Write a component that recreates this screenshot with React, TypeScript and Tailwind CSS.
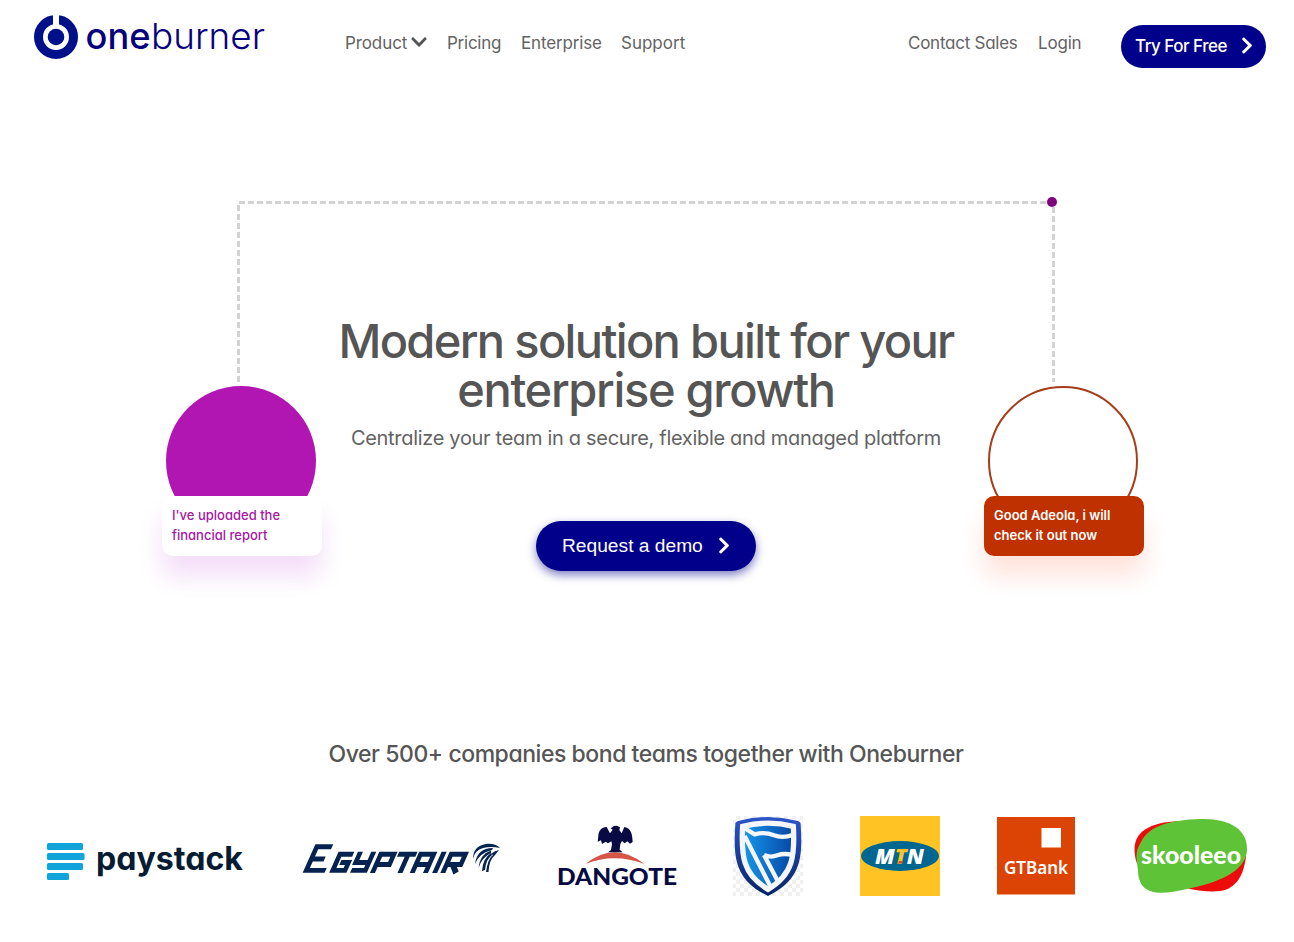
import React from 'react';

function ChevronRight({ className }: { className: string }) {
  return (
    <svg className={className} viewBox="0 0 320 512" fill="currentColor">
      <path d="M285.476 272.971L91.132 467.314c-9.373 9.373-24.569 9.373-33.941 0l-22.667-22.667c-9.357-9.357-9.375-24.522-.04-33.901L188.505 256 34.484 101.255c-9.335-9.379-9.317-24.544.04-33.901l22.667-22.667c9.373-9.373 24.569-9.373 33.941 0L285.475 239.03c9.373 9.372 9.373 24.568.001 33.941z" />
    </svg>
  );
}

function ChevronDown({ className }: { className: string }) {
  return (
    <svg className={className} viewBox="0 0 448 512" fill="currentColor">
      <path d="M207.029 381.476L12.686 187.132c-9.373-9.373-9.373-24.569 0-33.941l22.667-22.667c9.357-9.357 24.522-9.375 33.901-.04L224 284.505l154.745-154.021c9.379-9.335 24.544-9.317 33.901.04l22.667 22.667c9.373 9.373 9.373 24.569 0 33.941L240.971 381.476c-9.373 9.372-24.569 9.372-33.942 0z" />
    </svg>
  );
}

function Brand() {
  return (
    <svg className="h-12 w-[236px]" viewBox="32 12 236 48">
      <circle cx="56" cy="37" r="17.5" fill="none" stroke="#00108a" strokeWidth="9" />
      <rect x="53" y="12" width="6" height="14" fill="#fff" />
      <circle cx="56" cy="37" r="8.3" fill="#00108a" />
      <g fill="#07007c" className="font-['Inter']" fontSize="36">
        <text x="85.500" y="49" fontWeight="500" textLength="65" lengthAdjust="spacingAndGlyphs">one</text>
        <text x="151" y="49" fontWeight="300" textLength="114" lengthAdjust="spacingAndGlyphs">burner</text>
      </g>
    </svg>
  );
}

function Header() {
  return (
    <header className="flex h-[80px] items-start whitespace-nowrap pl-8 pr-7 text-[17px] leading-6 text-[#636363]">
      <div className="pt-3"><Brand /></div>
      <nav className="ml-[77px] flex gap-5 pt-[31px]">
        <a className="flex w-[82px] items-center justify-between tracking-[-0.1px]">Product<ChevronDown className="mb-[2px] h-[18px] w-4 text-[#555]" /></a>
        <a className="w-[54px] tracking-[-0.25px]">Pricing</a>
        <a className="w-[80px] tracking-[-0.15px]">Enterprise</a>
        <a>Support</a>
      </nav>
      <div className="ml-auto flex gap-5 pt-[31px]">
        <a className="w-[110px] tracking-[-0.25px]">Contact Sales</a>
        <a className="w-[43px] tracking-[-0.2px]">Login</a>
      </div>
      <button className="ml-10 mt-[25px] flex h-[43px] w-[145px] items-center justify-between rounded-full bg-[#00008b] pb-[2px] pl-[14px] pr-[13px] font-medium tracking-[-0.5px] text-white">
        Try For Free<ChevronRight className="mb-px h-[19px] w-3" />
      </button>
    </header>
  );
}

function Connector() {
  return (
    <svg className="absolute left-[237px] top-[116px] h-[190px] w-[824px]" viewBox="237 196 824 190" fill="none" stroke="#d3d3d3" strokeWidth="3">
      <path d="M238.500 382V202.500H1053.500V382" strokeDasharray="6 3" />
      <circle cx="1052" cy="202" r="5" fill="#800080" stroke="none" />
    </svg>
  );
}

function Hero() {
  return (
    <main className="relative flex h-[600px] pl-[162px] pr-[150px]">
      <Connector />
      <section className="w-40 shrink-0 pt-[306px]">
        <div className="ml-1 h-[150px] w-[150px] rounded-full bg-[#b216b2]" />
        <div className="relative -mt-10 h-[60px] rounded-[10px] bg-white px-[10px] pt-[9px] text-[13px] font-medium leading-5 text-[#a21aa2] shadow-[0_20px_25px_rgba(178,22,210,0.14)]">
          I've uploaded the<br />financial report
        </div>
      </section>
      <section className="flex w-[662px] shrink-0 flex-col items-center pr-[14px] pt-[236px] text-center text-[#555]">
        <h1 className="whitespace-nowrap text-[47px] font-medium leading-[49px]">
          <span className="block tracking-[-1.67px]">Modern solution built for your</span>
          <span className="block tracking-[-1.33px]">enterprise growth</span>
        </h1>
        <p className="mt-[10px] whitespace-nowrap text-[20px] leading-[28px] tracking-[-0.31px] text-[#636363]">Centralize your team in a secure, flexible and managed platform</p>
        <button className="mt-[69px] flex h-[50px] w-[220px] items-center justify-between rounded-full bg-[#00008b] pl-[26px] pr-[26px] font-['Liberation_Sans'] text-[19.2px] text-white shadow-[0_4px_10px_rgba(0,0,139,0.5)]">
          Request a demo<ChevronRight className="mb-[2px] h-[19px] w-3" />
        </button>
      </section>
      <section className="w-40 shrink-0 pt-[306px]">
        <div className="ml-1 h-[150px] w-[150px] rounded-full border-2 border-[#a63d18]" />
        <div className="relative -mt-10 h-[60px] rounded-[10px] bg-[#bf3100] px-[10px] pt-[9px] text-[13px] font-semibold leading-5 text-white shadow-[0_20px_25px_rgba(255,69,20,0.15)]">
          Good Adeola, i will<br />check it out now
        </div>
      </section>
    </main>
  );
}

function Paystack() {
  return (
    <svg className="h-20 w-[200px]" viewBox="45 816 200 80">
      <g fill="#11a4da">
        <rect x="47" y="843" width="36" height="7" rx="1.500" /><rect x="47" y="853" width="37.500" height="7" rx="1.500" />
        <rect x="47" y="863" width="36" height="7" rx="1.500" /><rect x="47" y="873" width="22" height="7" rx="1.500" />
      </g>
      <text x="96" y="869.500" fontSize="32" fontWeight="700" fill="#051c33" textLength="147" lengthAdjust="spacingAndGlyphs">paystack</text>
    </svg>
  );
}

function EgyptAir() {
  return (
    <svg className="h-20 w-[200px]" viewBox="301 816 200 80">
      <g fill="none" stroke="#06234f" strokeWidth="4.900" transform="translate(300 873) skewX(-24) scale(1.02 1)">
        <path d="M20 -26.300H5V-2.600H24M5 -14H18" />
        <path d="M44 -18.700H31V-2.600H43V-10.500H35" />
        <path d="M50 -21.300V-10.500H62M63 -21.300V-2.600H49" />
        <path d="M71 0V-18.700H84V-8.500H71" />
        <path d="M88 -18.700H106M98 -20V0" />
        <path d="M110 0V-18.700H123V0M111 -8.500H122" />
        <path d="M132 -21.300V0" />
        <path d="M140 0V-18.700H154V-8.500H141M146 -8.500L153 0" />
      </g>
      <g fill="#06234f">
        <path d="M500 848Q495 843 486 844Q473 846 473 859Q475 850 483 848Q491 846 500 848Z" />
        <path d="M493 848Q477 848 475 864Q479 853 492 850Z" />
        <path d="M491 850.500Q480 854 478.500 868Q482 857 491 853Z" />
        <path d="M491 853Q483 858 482 871L485 870Q486 859 492 855Z" />
        <path d="M493 855Q488 858 486 872H488.500Q489 860 495 855L499 850Q494 851 491 854Z" />
      </g>
    </svg>
  );
}

function Dangote() {
  return (
    <svg className="h-20 w-[120px]" viewBox="557 816 120 80">
      <path d="M585.500 864Q614 840.500 644.500 864Q614 852.500 585.500 864" fill="#d65545" />
      <path transform="translate(590 820) scale(.3333)" fill="#080b43" d="M50 21C34 21 25 34 25 48L23 65L33 61L36 72L47 65L54 70L64 64L66 72L63 90L54 97H98L89 89L91 72L96 63L104 70L112 64L120 71L128 66C127 44 124 24 103 21L95 40L88 30L90 22L80 17L72 18L62 25L68 29L60 40Z" />
      <text x="557" y="885" fontSize="23.500" fontWeight="900" fontFamily="Lato, sans-serif" fill="#080b43" textLength="120" lengthAdjust="spacingAndGlyphs">DANGOTE</text>
    </svg>
  );
}

function Shield() {
  return (
    <svg className="h-20 w-[70px]" viewBox="733 816 70 80">
      <defs>
        <linearGradient id="shield-rim" x2="0" y2="1"><stop stopColor="#2b55c9" /><stop offset="1" stopColor="#062465" /></linearGradient>
        <linearGradient id="shield-blue"><stop stopColor="#1599ed" /><stop offset="1" stopColor="#0646a4" /></linearGradient>
        <pattern id="checks" width="8" height="8" patternUnits="userSpaceOnUse"><path d="M0 0h4v4H0zM4 4h4v4H4z" fill="#f0f0f0" /></pattern>
      </defs>
      <rect x="733" y="816" width="70" height="80" fill="url(#checks)" />
      <g transform="translate(728 812) scale(.3333)">
        <path d="M22 36Q22 28 34 26Q120 4 206 26Q218 28 218 36C225 140 218 205 120 252C22 205 15 140 22 36Z" fill="url(#shield-rim)" />
        <path d="M44 43Q120 24 196 43C201 130 196 188 120 232C44 188 39 130 44 43Z" fill="url(#shield-blue)" stroke="#f4f6fa" strokeWidth="16" />
        <path d="M52 50L80 67Q110 58 138 70Q164 80 196 68M50 72L128 225M108 129Q128 138 148 130Q170 122 196 130M108 129L148 205" fill="none" stroke="#f4f6fa" strokeWidth="13" strokeLinejoin="round" />
      </g>
    </svg>
  );
}

function Mtn() {
  return (
    <svg className="h-20 w-[81px]" viewBox="859 816 81 80">
      <rect x="860" y="816" width="80" height="80" fill="#ffc423" />
      <ellipse cx="900" cy="856" rx="39" ry="15" fill="#006791" />
      <text x="875" y="863.500" fontSize="21" fontWeight="800" fontStyle="italic" fontFamily="Open Sans, sans-serif" fill="#fff" textLength="49" lengthAdjust="spacingAndGlyphs">M<tspan fill="#ffc423">T</tspan>N</text>
      <path d="M899 861h4l-1 2.500h-4z" fill="#df4632" />
    </svg>
  );
}

function GtBank() {
  return (
    <svg className="h-20 w-[82px]" viewBox="996 816 82 80">
      <rect x="997" y="817" width="78" height="77.500" fill="#dc4405" />
      <rect x="1041.500" y="828" width="19.500" height="19.500" fill="#fff" />
      <text x="1004" y="873.500" fontSize="17.500" fontWeight="600" fontFamily="Noto Sans, sans-serif" fill="#fff" textLength="64" lengthAdjust="spacingAndGlyphs">GTBank</text>
    </svg>
  );
}

function Skooleeo() {
  return (
    <svg className="h-20 w-[114px] overflow-visible" viewBox="1134 816 114 80">
      <path d="M1184 821C1155 821 1134 829 1134.500 850C1135 860 1137 866 1142 870L1190 889C1200 891 1210 892 1220 891C1236 889 1244 875 1246 856Z" fill="#ed0b0b" />
      <path d="M1200 819C1229 818 1248 829 1247 850C1246 872 1217 883 1187 889C1158 896 1139 895 1138 871C1137 859 1134 853 1141 842C1149 825 1172 820 1200 819Z" fill="#5fc337" />
      <text x="1141" y="864" fontSize="25" fontWeight="900" fontFamily="Lato, sans-serif" fill="#fff" textLength="100" lengthAdjust="spacingAndGlyphs">skooleeo</text>
    </svg>
  );
}

export default function App() {
  return (
    <div className="h-[942px] overflow-hidden bg-white font-['Inter',sans-serif] [font-feature-settings:'cv11']">
      <Header />
      <Hero />
      <section className="pt-[58px]">
        <h2 className="pr-[2px] text-center text-[23px] font-medium leading-8 tracking-[-0.45px] text-[#555]">Over 500+ companies bond teams together with Oneburner</h2>
        <div className="mt-[46px] flex gap-14 pl-[45px]">
          <Paystack /><EgyptAir /><Dangote /><Shield /><Mtn /><GtBank /><Skooleeo />
        </div>
      </section>
    </div>
  );
}
